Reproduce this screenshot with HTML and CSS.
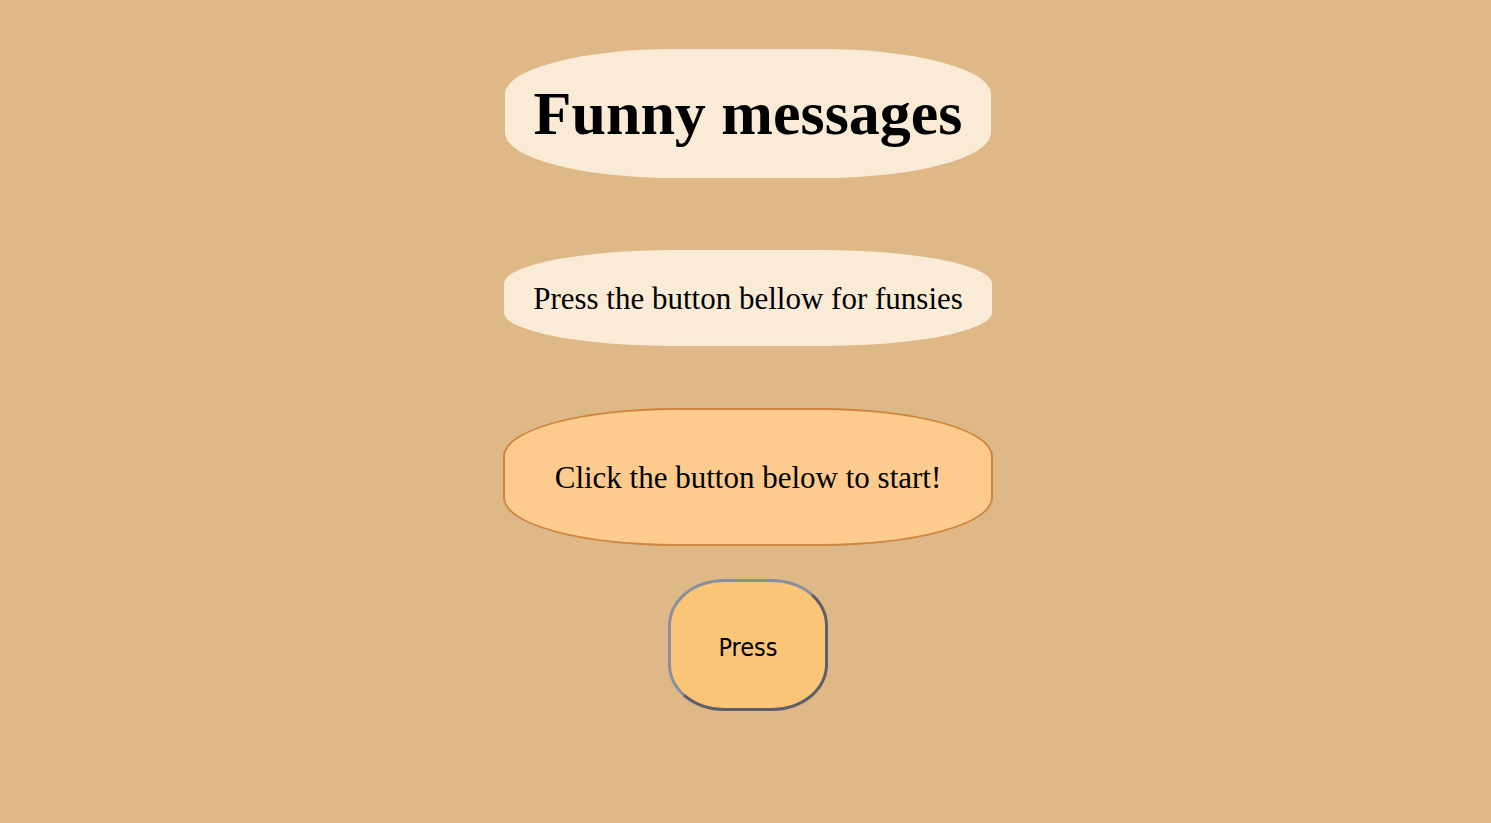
FILE: index.html
```html
<!DOCTYPE html>
<html>
<head>
<meta charset="utf-8">
<link rel="stylesheet" href="styles.css">
</head>
<body>
<main class="page">
  <h1 class="title">Funny messages</h1>
  <p class="subtitle">Press the button bellow for funsies</p>
  <div class="message">Click the button below to start!</div>
  <button class="press">Press</button>
</main>
</body>
</html>
```
FILE: styles.css
```css
html, body {
  margin: 0;
  padding: 0;
}
body {
  background: #deb887;
  font-family: "Liberation Serif", "Times New Roman", serif;
  color: #000;
  min-height: 823px;
}
.page {
  display: flex;
  flex-direction: column;
  align-items: center;
  padding-top: 49px;
  padding-left: 5px;
}
.title {
  margin: 0;
  width: 486px;
  height: 129px;
  display: flex;
  align-items: center;
  justify-content: center;
  background: #faebd7;
  border-radius: 35%;
  font-size: 62px;
  font-weight: bold;
  box-sizing: border-box;
}
.subtitle {
  margin: 72px 0 0;
  width: 488px;
  height: 96px;
  display: flex;
  align-items: center;
  justify-content: center;
  background: #faebd7;
  border-radius: 35%;
  font-size: 31px;
  box-sizing: border-box;
  padding-top: 2px;
}
.message {
  margin-top: 62px;
  width: 490px;
  height: 138px;
  box-sizing: border-box;
  display: flex;
  align-items: center;
  justify-content: center;
  background: #fdcb8d;
  border: 2px solid #cd853f;
  border-radius: 35%;
  font-size: 31px;
  padding-top: 2px;
}
.press {
  margin-top: 33px;
  width: 160px;
  height: 132px;
  box-sizing: border-box;
  background: #fac576;
  border: 3px solid;
  border-color: #8a8f9f #5f5f6a #5f5f6a #8a8f9f;
  border-radius: 35%;
  font-family: "DejaVu Sans Condensed", "DejaVu Sans", sans-serif;
  font-size: 25px;
  color: #000;
  padding: 4px 0 0;
}
```
